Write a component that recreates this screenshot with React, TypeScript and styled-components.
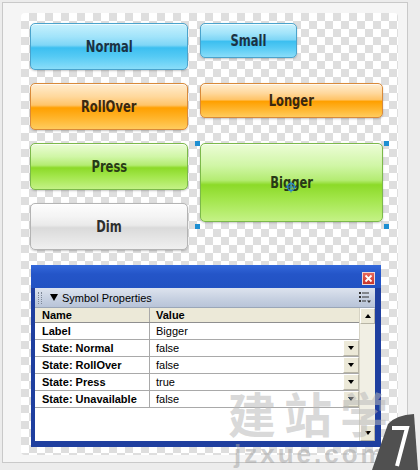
import styled, { createGlobalStyle } from "styled-components";

const GlobalStyle = createGlobalStyle`
  body {
    margin: 0;
    background: #ececec;
    font-family: "Liberation Sans", Arial, sans-serif;
  }
`;

type Tone = "blue" | "orange" | "green" | "gray";

const tones: Record<Tone, { bg: string; border: string; text: string }> = {
  blue: {
    bg: "linear-gradient(to bottom, #c8f1fd 0%, #a2e4fa 28%, #7fd6f6 47%, #3cbff0 53%, #55caf4 72%, #8addf9 100%)",
    border: "#4aa3cc",
    text: "#1b3243",
  },
  orange: {
    bg: "linear-gradient(to bottom, #ffedd0 0%, #ffd89c 28%, #ffc468 47%, #ffa000 53%, #ffb124 72%, #ffcc5e 100%)",
    border: "#d98a3a",
    text: "#3a2810",
  },
  green: {
    bg: "linear-gradient(to bottom, #ecfcd6 0%, #d0f6a6 28%, #b4ec72 47%, #8cda28 53%, #a3e64c 72%, #c4f286 100%)",
    border: "#7cb94a",
    text: "#283a16",
  },
  gray: {
    bg: "linear-gradient(to bottom, #fdfdfd 0%, #f4f4f4 28%, #eaeaea 47%, #dadada 53%, #e3e3e3 72%, #f0f0f0 100%)",
    border: "#b4b4b4",
    text: "#2e2e2e",
  },
};

const Page = styled.div`
  position: relative;
  width: 420px;
  height: 470px;
  overflow: hidden;
  padding: 2px 0 0 2px;
  box-sizing: border-box;
`;

const Frame = styled.div`
  width: 406px;
  height: 461px;
  box-sizing: border-box;
  border: 1px solid #c9c9c9;
  background: #f5f5f5;
  padding: 10px 0 0 18px;
`;

const Canvas = styled.div`
  width: 377px;
  height: 442px;
  box-sizing: border-box;
  border-radius: 4px;
  background: repeating-conic-gradient(#dedede 0 25%, #ffffff 0 50%) 0 0 / 16px 16px;
  padding: 10px 0 0 9px;
`;

const ButtonGrid = styled.div`
  display: grid;
  grid-template-columns: 158px 183px;
  grid-template-rows: repeat(4, 47px);
  column-gap: 12px;
  row-gap: 13px;
`;

const Cell = styled.div<{ $span?: number }>`
  position: relative;
  grid-row: ${(p) => (p.$span ? `span ${p.$span}` : "auto")};
`;

const GelButton = styled.div<{ $tone: Tone; $w?: number; $h: number }>`
  width: ${(p) => (p.$w ? `${p.$w}px` : "100%")};
  height: ${(p) => p.$h}px;
  box-sizing: border-box;
  display: flex;
  align-items: center;
  justify-content: center;
  border-radius: 5px;
  border: 1px solid ${(p) => tones[p.$tone].border};
  background: ${(p) => tones[p.$tone].bg};
  box-shadow: 0 1px 2px rgba(0, 0, 0, 0.22), inset 0 1px 0 rgba(255, 255, 255, 0.7);
  color: ${(p) => tones[p.$tone].text};
  position: relative;
`;

const Caption = styled.span`
  display: inline-block;
  font-family: "DejaVu Sans Condensed", "Liberation Sans", sans-serif;
  font-weight: bold;
  font-size: 16px;
  transform: scaleX(0.8);
`;

const Handle = styled.span<{ $x: "l" | "r"; $y: "t" | "b" }>`
  position: absolute;
  width: 5px;
  height: 5px;
  background: #1e8fd2;
  ${(p) => (p.$x === "l" ? "left: -5px;" : "right: -6px;")}
  ${(p) => (p.$y === "t" ? "top: -2px;" : "top: 81px;")}
`;

const RegMark = styled.svg`
  position: absolute;
  left: 84px;
  top: 37px;
`;

const Panel = styled.div`
  margin: 15px 0 0 1px;
  width: 350px;
  height: 182px;
  box-sizing: border-box;
  background: #1f3f9f;
  padding: 0 6px 6px 4px;
  display: flex;
  flex-direction: column;
`;

const TitleBar = styled.div`
  height: 23px;
  margin: 0 -6px 0 -4px;
  background: linear-gradient(to bottom, #3368da, #2455c8 40%, #2252c2);
  display: flex;
  align-items: center;
  justify-content: flex-end;
  padding-right: 6px;
`;

const CloseBtn = styled.div`
  width: 13px;
  height: 13px;
  box-sizing: border-box;
  border: 1px solid #f2d6d0;
  background: linear-gradient(#e8685a, #c8342a);
  display: flex;
  align-items: center;
  justify-content: center;
  margin-top: 3px;
`;

const Inner = styled.div`
  flex: 1;
  display: flex;
  flex-direction: column;
  background: #fff;
`;

const HeaderBar = styled.div`
  height: 20px;
  display: flex;
  align-items: center;
  background: linear-gradient(to bottom, #dde3ee, #c5cfe0 60%, #b8c4d8);
  border-bottom: 1px solid #9aa6b8;
  box-sizing: border-box;
  padding: 0 3px 0 3px;
  font-size: 11px;
  color: #000;
`;

const Grip = styled.span`
  width: 4px;
  height: 12px;
  border-left: 1px dotted #7d8797;
  border-right: 1px dotted #7d8797;
  box-sizing: border-box;
  margin-right: 8px;
`;

const Triangle = styled.span`
  width: 0;
  height: 0;
  border-left: 4px solid transparent;
  border-right: 4px solid transparent;
  border-top: 7px solid #000;
  margin-right: 4px;
`;

const HeaderTitle = styled.span`
  flex: 1;
`;

const Body = styled.div`
  flex: 1;
  display: flex;
`;

const Table = styled.div`
  flex: 1;
  display: flex;
  flex-direction: column;
`;

const Row = styled.div<{ $head?: boolean }>`
  display: grid;
  grid-template-columns: 115px 1fr;
  height: ${(p) => (p.$head ? 15 : 17)}px;
  box-sizing: border-box;
  border-bottom: 1px solid ${(p) => (p.$head ? "#8f8f8f" : "#a9a9a9")};
  background: ${(p) => (p.$head ? "#ece9d8" : "#fff")};
  font-size: 11px;
  font-weight: ${(p) => (p.$head ? "bold" : "normal")};
  color: #000;
`;

const NameCell = styled.div`
  border-right: 1px solid #a9a9a9;
  padding-left: 7px;
  display: flex;
  align-items: center;
  font-weight: bold;
`;

const ValueCell = styled.div`
  padding-left: 6px;
  display: flex;
  align-items: center;
  justify-content: space-between;
`;

const DropBtn = styled.div`
  width: 16px;
  height: 16px;
  box-sizing: border-box;
  background: #ece9d8;
  border: 1px solid #b8b5a6;
  border-top-color: #fff;
  border-left-color: #fff;
  display: flex;
  align-items: center;
  justify-content: center;
  align-self: flex-start;
`;

const SmallArrow = styled.span<{ $up?: boolean }>`
  width: 0;
  height: 0;
  border-left: 3px solid transparent;
  border-right: 3px solid transparent;
  ${(p) => (p.$up ? "border-bottom: 4px solid #000;" : "border-top: 4px solid #000;")}
`;

const Scrollbar = styled.div`
  width: 16px;
  display: flex;
  flex-direction: column;
  background: #f1efe4;
  border-left: 1px solid #d6d3c4;
  box-sizing: border-box;
`;

const ScrollBtn = styled.div`
  height: 16px;
  background: #ece9d8;
  border: 1px solid #b8b5a6;
  border-top-color: #fff;
  border-left-color: #fff;
  box-sizing: border-box;
  display: flex;
  align-items: center;
  justify-content: center;
`;

const Track = styled.div`
  flex: 1;
`;

const Watermark = styled.div`
  position: absolute;
  left: 228px;
  top: 387px;
  pointer-events: none;
  display: flex;
  flex-direction: column;
  align-items: flex-start;
`;

const WmChinese = styled.span`
  font-family: "Noto Sans CJK SC", sans-serif;
  font-weight: bold;
  font-size: 48px;
  line-height: 50px;
  color: rgba(185, 185, 185, 0.55);
  letter-spacing: 8px;
`;

const WmLatin = styled.span`
  font-family: "Liberation Sans", sans-serif;
  font-weight: bold;
  font-size: 26px;
  line-height: 28px;
  margin-top: 3px;
  color: rgba(165, 165, 165, 0.55);
  letter-spacing: 3px;
  margin-left: 6px;
`;

const Corner = styled.svg`
  position: absolute;
  right: 0;
  bottom: 0;
  pointer-events: none;
`;

const rows = [
  { name: "Label", value: "Bigger", drop: false },
  { name: "State: Normal", value: "false", drop: true },
  { name: "State: RollOver", value: "false", drop: true },
  { name: "State: Press", value: "true", drop: true },
  { name: "State: Unavailable", value: "false", drop: true },
];

export default function App() {
  return (
    <>
      <GlobalStyle />
      <Page>
        <Frame>
          <Canvas>
            <ButtonGrid>
              <Cell>
                <GelButton $tone="blue" $h={47}>
                  <Caption>Normal</Caption>
                </GelButton>
              </Cell>
              <Cell>
                <GelButton $tone="blue" $w={97} $h={35}>
                  <Caption>Small</Caption>
                </GelButton>
              </Cell>
              <Cell>
                <GelButton $tone="orange" $h={47}>
                  <Caption>RollOver</Caption>
                </GelButton>
              </Cell>
              <Cell>
                <GelButton $tone="orange" $h={35}>
                  <Caption>Longer</Caption>
                </GelButton>
              </Cell>
              <Cell>
                <GelButton $tone="green" $h={47}>
                  <Caption>Press</Caption>
                </GelButton>
              </Cell>
              <Cell $span={2}>
                <GelButton $tone="green" $h={79}>
                  <Caption>Bigger</Caption>
                  <RegMark width="12" height="12" viewBox="0 0 12 12">
                    <circle cx="6" cy="6" r="3.5" fill="none" stroke="#2f86c8" strokeWidth="1.3" />
                    <path d="M6 0.5V11.5M0.5 6H11.5" stroke="#2f86c8" strokeWidth="1" />
                  </RegMark>
                </GelButton>
                <Handle $x="l" $y="t" />
                <Handle $x="r" $y="t" />
                <Handle $x="l" $y="b" />
                <Handle $x="r" $y="b" />
              </Cell>
              <Cell>
                <GelButton $tone="gray" $h={47}>
                  <Caption>Dim</Caption>
                </GelButton>
              </Cell>
            </ButtonGrid>

            <Panel>
              <TitleBar>
                <CloseBtn>
                  <svg width="9" height="9" viewBox="0 0 9 9">
                    <path d="M1.5 1.5L7.5 7.5M7.5 1.5L1.5 7.5" stroke="#fff" strokeWidth="1.8" />
                  </svg>
                </CloseBtn>
              </TitleBar>
              <Inner>
                <HeaderBar>
                  <Grip />
                  <Triangle />
                  <HeaderTitle>Symbol Properties</HeaderTitle>
                  <svg width="14" height="13" viewBox="0 0 14 13">
                    <rect x="1" y="1" width="2" height="2" fill="#333" />
                    <rect x="4" y="1.5" width="7" height="1" fill="#333" />
                    <rect x="1" y="5" width="2" height="2" fill="#333" />
                    <rect x="4" y="5.5" width="7" height="1" fill="#333" />
                    <rect x="1" y="9" width="2" height="2" fill="#333" />
                    <rect x="4" y="9.5" width="4" height="1" fill="#333" />
                    <path d="M9 9.5H13L11 12Z" fill="#333" />
                  </svg>
                </HeaderBar>
                <Body>
                  <Table>
                    <Row $head>
                      <NameCell>Name</NameCell>
                      <ValueCell>Value</ValueCell>
                    </Row>
                    {rows.map((r) => (
                      <Row key={r.name}>
                        <NameCell>{r.name}</NameCell>
                        <ValueCell>
                          {r.value}
                          {r.drop && (
                            <DropBtn>
                              <SmallArrow />
                            </DropBtn>
                          )}
                        </ValueCell>
                      </Row>
                    ))}
                  </Table>
                  <Scrollbar>
                    <ScrollBtn>
                      <SmallArrow $up />
                    </ScrollBtn>
                    <Track />
                    <ScrollBtn>
                      <SmallArrow />
                    </ScrollBtn>
                  </Scrollbar>
                </Body>
              </Inner>
            </Panel>
          </Canvas>
        </Frame>

        <Watermark>
          <WmChinese>建站学</WmChinese>
          <WmLatin>jzxue.com</WmLatin>
        </Watermark>
        <Corner width="52" height="58" viewBox="0 0 52 58">
          <path d="M4 58 L20 12 Q28 3 46 2 L50 58 Z" fill="#505050" />
          <path d="M24 16 H39 L29 54" fill="none" stroke="#fff" strokeWidth="4" />
        </Corner>
      </Page>
    </>
  );
}
